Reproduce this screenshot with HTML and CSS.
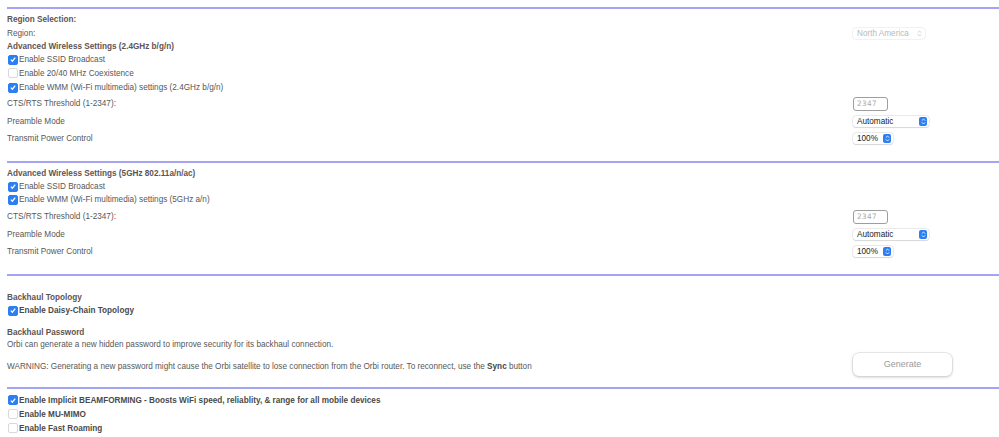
FILE: index.html
```html
<!DOCTYPE html>
<html lang="en">
<head>
  <meta charset="UTF-8">
  <title>Advanced Wireless Settings</title>
  <link rel="stylesheet" href="styles.css">
</head>
<body>
  <div class="page">
    <hr class="sep first">

    <!-- 2.4GHz -->
    <section class="block">
      <div class="row h14"><span class="head">Region Selection:</span></div>
      <div class="row h14">
        <span class="label">Region:</span>
        <div class="ctl">
          <div class="select disabled w-region">
            <span>North America</span>
            <span class="arrows grey">
              <svg viewBox="0 0 6 8" width="5" height="7"><path d="M1 3 L3 1 L5 3 M1 5 L3 7 L5 5" fill="none" stroke="#c4c4c4" stroke-width="1"/></svg>
            </span>
          </div>
        </div>
      </div>
      <div class="row h13"><span class="head">Advanced Wireless Settings (2.4GHz b/g/n)</span></div>
      <div class="row h13">
        <span class="box on"><svg viewBox="0 0 10 10" width="9" height="9"><path d="M2.3 5.2 L4.2 7.1 L7.8 2.6" fill="none" stroke="#fff" stroke-width="1.6"/></svg></span>
        <span class="label">Enable SSID Broadcast</span>
      </div>
      <div class="row h14">
        <span class="box"></span>
        <span class="label">Enable 20/40 MHz Coexistence</span>
      </div>
      <div class="row h15">
        <span class="box on"><svg viewBox="0 0 10 10" width="9" height="9"><path d="M2.3 5.2 L4.2 7.1 L7.8 2.6" fill="none" stroke="#fff" stroke-width="1.6"/></svg></span>
        <span class="label">Enable WMM (Wi-Fi multimedia) settings (2.4GHz b/g/n)</span>
      </div>
      <div class="row h17">
        <span class="label">CTS/RTS Threshold (1-2347):</span>
        <div class="ctl"><div class="field">2347</div></div>
      </div>
      <div class="row h18">
        <span class="label">Preamble Mode</span>
        <div class="ctl">
          <div class="select w-auto">
            <span>Automatic</span>
            <span class="arrows"><svg viewBox="0 0 6 8" width="5" height="7"><path d="M1 3 L3 1 L5 3 M1 5 L3 7 L5 5" fill="none" stroke="#fff" stroke-width="1"/></svg></span>
          </div>
        </div>
      </div>
      <div class="row h17">
        <span class="label">Transmit Power Control</span>
        <div class="ctl">
          <div class="select w-pct">
            <span>100%</span>
            <span class="arrows"><svg viewBox="0 0 6 8" width="5" height="7"><path d="M1 3 L3 1 L5 3 M1 5 L3 7 L5 5" fill="none" stroke="#fff" stroke-width="1"/></svg></span>
          </div>
        </div>
      </div>
    </section>

    <hr class="sep">

    <!-- 5GHz -->
    <section class="block">
      <div class="row h14"><span class="head">Advanced Wireless Settings (5GHz 802.11a/n/ac)</span></div>
      <div class="row h13">
        <span class="box on"><svg viewBox="0 0 10 10" width="9" height="9"><path d="M2.3 5.2 L4.2 7.1 L7.8 2.6" fill="none" stroke="#fff" stroke-width="1.6"/></svg></span>
        <span class="label">Enable SSID Broadcast</span>
      </div>
      <div class="row h13">
        <span class="box on"><svg viewBox="0 0 10 10" width="9" height="9"><path d="M2.3 5.2 L4.2 7.1 L7.8 2.6" fill="none" stroke="#fff" stroke-width="1.6"/></svg></span>
        <span class="label">Enable WMM (Wi-Fi multimedia) settings (5GHz a/n)</span>
      </div>
      <div class="row h17 gap">
        <span class="label">CTS/RTS Threshold (1-2347):</span>
        <div class="ctl"><div class="field">2347</div></div>
      </div>
      <div class="row h18">
        <span class="label">Preamble Mode</span>
        <div class="ctl">
          <div class="select w-auto">
            <span>Automatic</span>
            <span class="arrows"><svg viewBox="0 0 6 8" width="5" height="7"><path d="M1 3 L3 1 L5 3 M1 5 L3 7 L5 5" fill="none" stroke="#fff" stroke-width="1"/></svg></span>
          </div>
        </div>
      </div>
      <div class="row h17">
        <span class="label">Transmit Power Control</span>
        <div class="ctl">
          <div class="select w-pct">
            <span>100%</span>
            <span class="arrows"><svg viewBox="0 0 6 8" width="5" height="7"><path d="M1 3 L3 1 L5 3 M1 5 L3 7 L5 5" fill="none" stroke="#fff" stroke-width="1"/></svg></span>
          </div>
        </div>
      </div>
    </section>

    <hr class="sep">

    <!-- Backhaul -->
    <section class="block backhaul">
      <div class="row h14 topo"><span class="head">Backhaul Topology</span></div>
      <div class="row h13">
        <span class="box on"><svg viewBox="0 0 10 10" width="9" height="9"><path d="M2.3 5.2 L4.2 7.1 L7.8 2.6" fill="none" stroke="#fff" stroke-width="1.6"/></svg></span>
        <span class="label strong">Enable Daisy-Chain Topology</span>
      </div>
      <div class="row h14 pw"><span class="head">Backhaul Password</span></div>
      <div class="row h11"><span class="label">Orbi can generate a new hidden password to improve security for its backhaul connection.</span></div>
      <div class="row warn">
        <span class="label">WARNING: Generating a new password might cause the Orbi satellite to lose connection from the Orbi router. To reconnect, use the <b>Sync</b> button</span>
        <div class="ctl"><button class="gen" type="button">Generate</button></div>
      </div>
    </section>

    <hr class="sep s4">

    <!-- Extras -->
    <section class="block extras">
      <div class="row h14">
        <span class="box on"><svg viewBox="0 0 10 10" width="9" height="9"><path d="M2.3 5.2 L4.2 7.1 L7.8 2.6" fill="none" stroke="#fff" stroke-width="1.6"/></svg></span>
        <span class="label strong">Enable Implicit BEAMFORMING - Boosts WiFi speed, reliablity, &amp; range for all mobile devices</span>
      </div>
      <div class="row h14">
        <span class="box"></span>
        <span class="label strong">Enable MU-MIMO</span>
      </div>
      <div class="row h14">
        <span class="box"></span>
        <span class="label strong">Enable Fast Roaming</span>
      </div>
    </section>
  </div>
</body>
</html>
```

FILE: styles.css
```css
/* General */
body {
  margin: 0;
  font-family: "Liberation Sans", Arial, sans-serif;
  font-size: 8.2px;
  color: #575757;
  background: #fff;
}

.page {
  margin-left: 7px;
}

/* Separators */
.sep {
  border: none;
  height: 2px;
  margin: 14px 0 0;
  background: #a4a4f2;
}

.sep.first { margin-top: 7px; }
.sep.s4 { margin-top: 11px; }

/* Rows */
.block {
  padding-top: 3px;
}

.row {
  display: flex;
  align-items: center;
}

.h11 { height: 11px; }
.h13 { height: 13px; }
.h14 { height: 14px; }
.h15 { height: 15px; }
.h17 { height: 17px; }
.h18 { height: 18px; }

.row.gap { margin-top: 2px; }

.head {
  font-weight: bold;
  color: #5e5454;
}

.label {
  flex: 1;
}

.label.strong {
  font-weight: bold;
  color: #4a4a4a;
}

.label b {
  color: #444;
}

/* Checkbox */
.box {
  width: 8px;
  height: 8px;
  margin: 0 1px 0 1px;
  border: 0.5px solid #d9d9d9;
  border-radius: 2px;
  background: #fff;
  display: flex;
  align-items: center;
  justify-content: center;
  box-sizing: content-box;
}

.box.on {
  background: #2b7ff2;
  border-color: #2b7ff2;
}

/* Controls column */
.ctl {
  width: 146px;
  display: flex;
  align-items: center;
}

.field {
  width: 30px;
  height: 12px;
  border: 1px solid #9e9e9e;
  border-radius: 3px;
  padding-left: 3px;
  font-family: "DejaVu Sans Mono", monospace;
  font-size: 7.5px;
  line-height: 12px;
  color: #a9a9a9;
  letter-spacing: 0.5px;
}

.select {
  height: 11px;
  display: flex;
  align-items: center;
  justify-content: space-between;
  padding: 0 2px 0 4px;
  border-radius: 3px;
  background: #fff;
  box-shadow: 0 0 0 0.5px #d8d8d8, 0 0.5px 1px rgba(0, 0, 0, 0.15);
  color: #222;
  font-size: 8.2px;
}

.select.disabled {
  color: #b9b9b9;
  box-shadow: 0 0 0 0.5px #e4e4e4;
}

.w-region { width: 66px; }
.w-auto { width: 70px; }
.w-pct { width: 34px; }

.arrows {
  width: 8px;
  height: 9px;
  border-radius: 2px;
  background: #2b7ff2;
  display: flex;
  align-items: center;
  justify-content: center;
}

.arrows.grey {
  background: none;
}

/* Backhaul */
.row.topo { margin-top: 11px; }
.row.pw { margin-top: 8px; }

.row.warn {
  height: 24px;
  margin-top: 2px;
}

.warn .label {
  padding-top: 4px;
}

.gen {
  width: 99px;
  height: 23px;
  border: none;
  border-radius: 6px;
  background: #fff;
  box-shadow: 0 0 0 0.5px #d4d4d4, 0 1px 3px rgba(0, 0, 0, 0.25);
  font-family: "Liberation Sans", Arial, sans-serif;
  font-size: 9px;
  color: #9a9a9a;
}

.extras {
  padding-top: 4px;
}
```
